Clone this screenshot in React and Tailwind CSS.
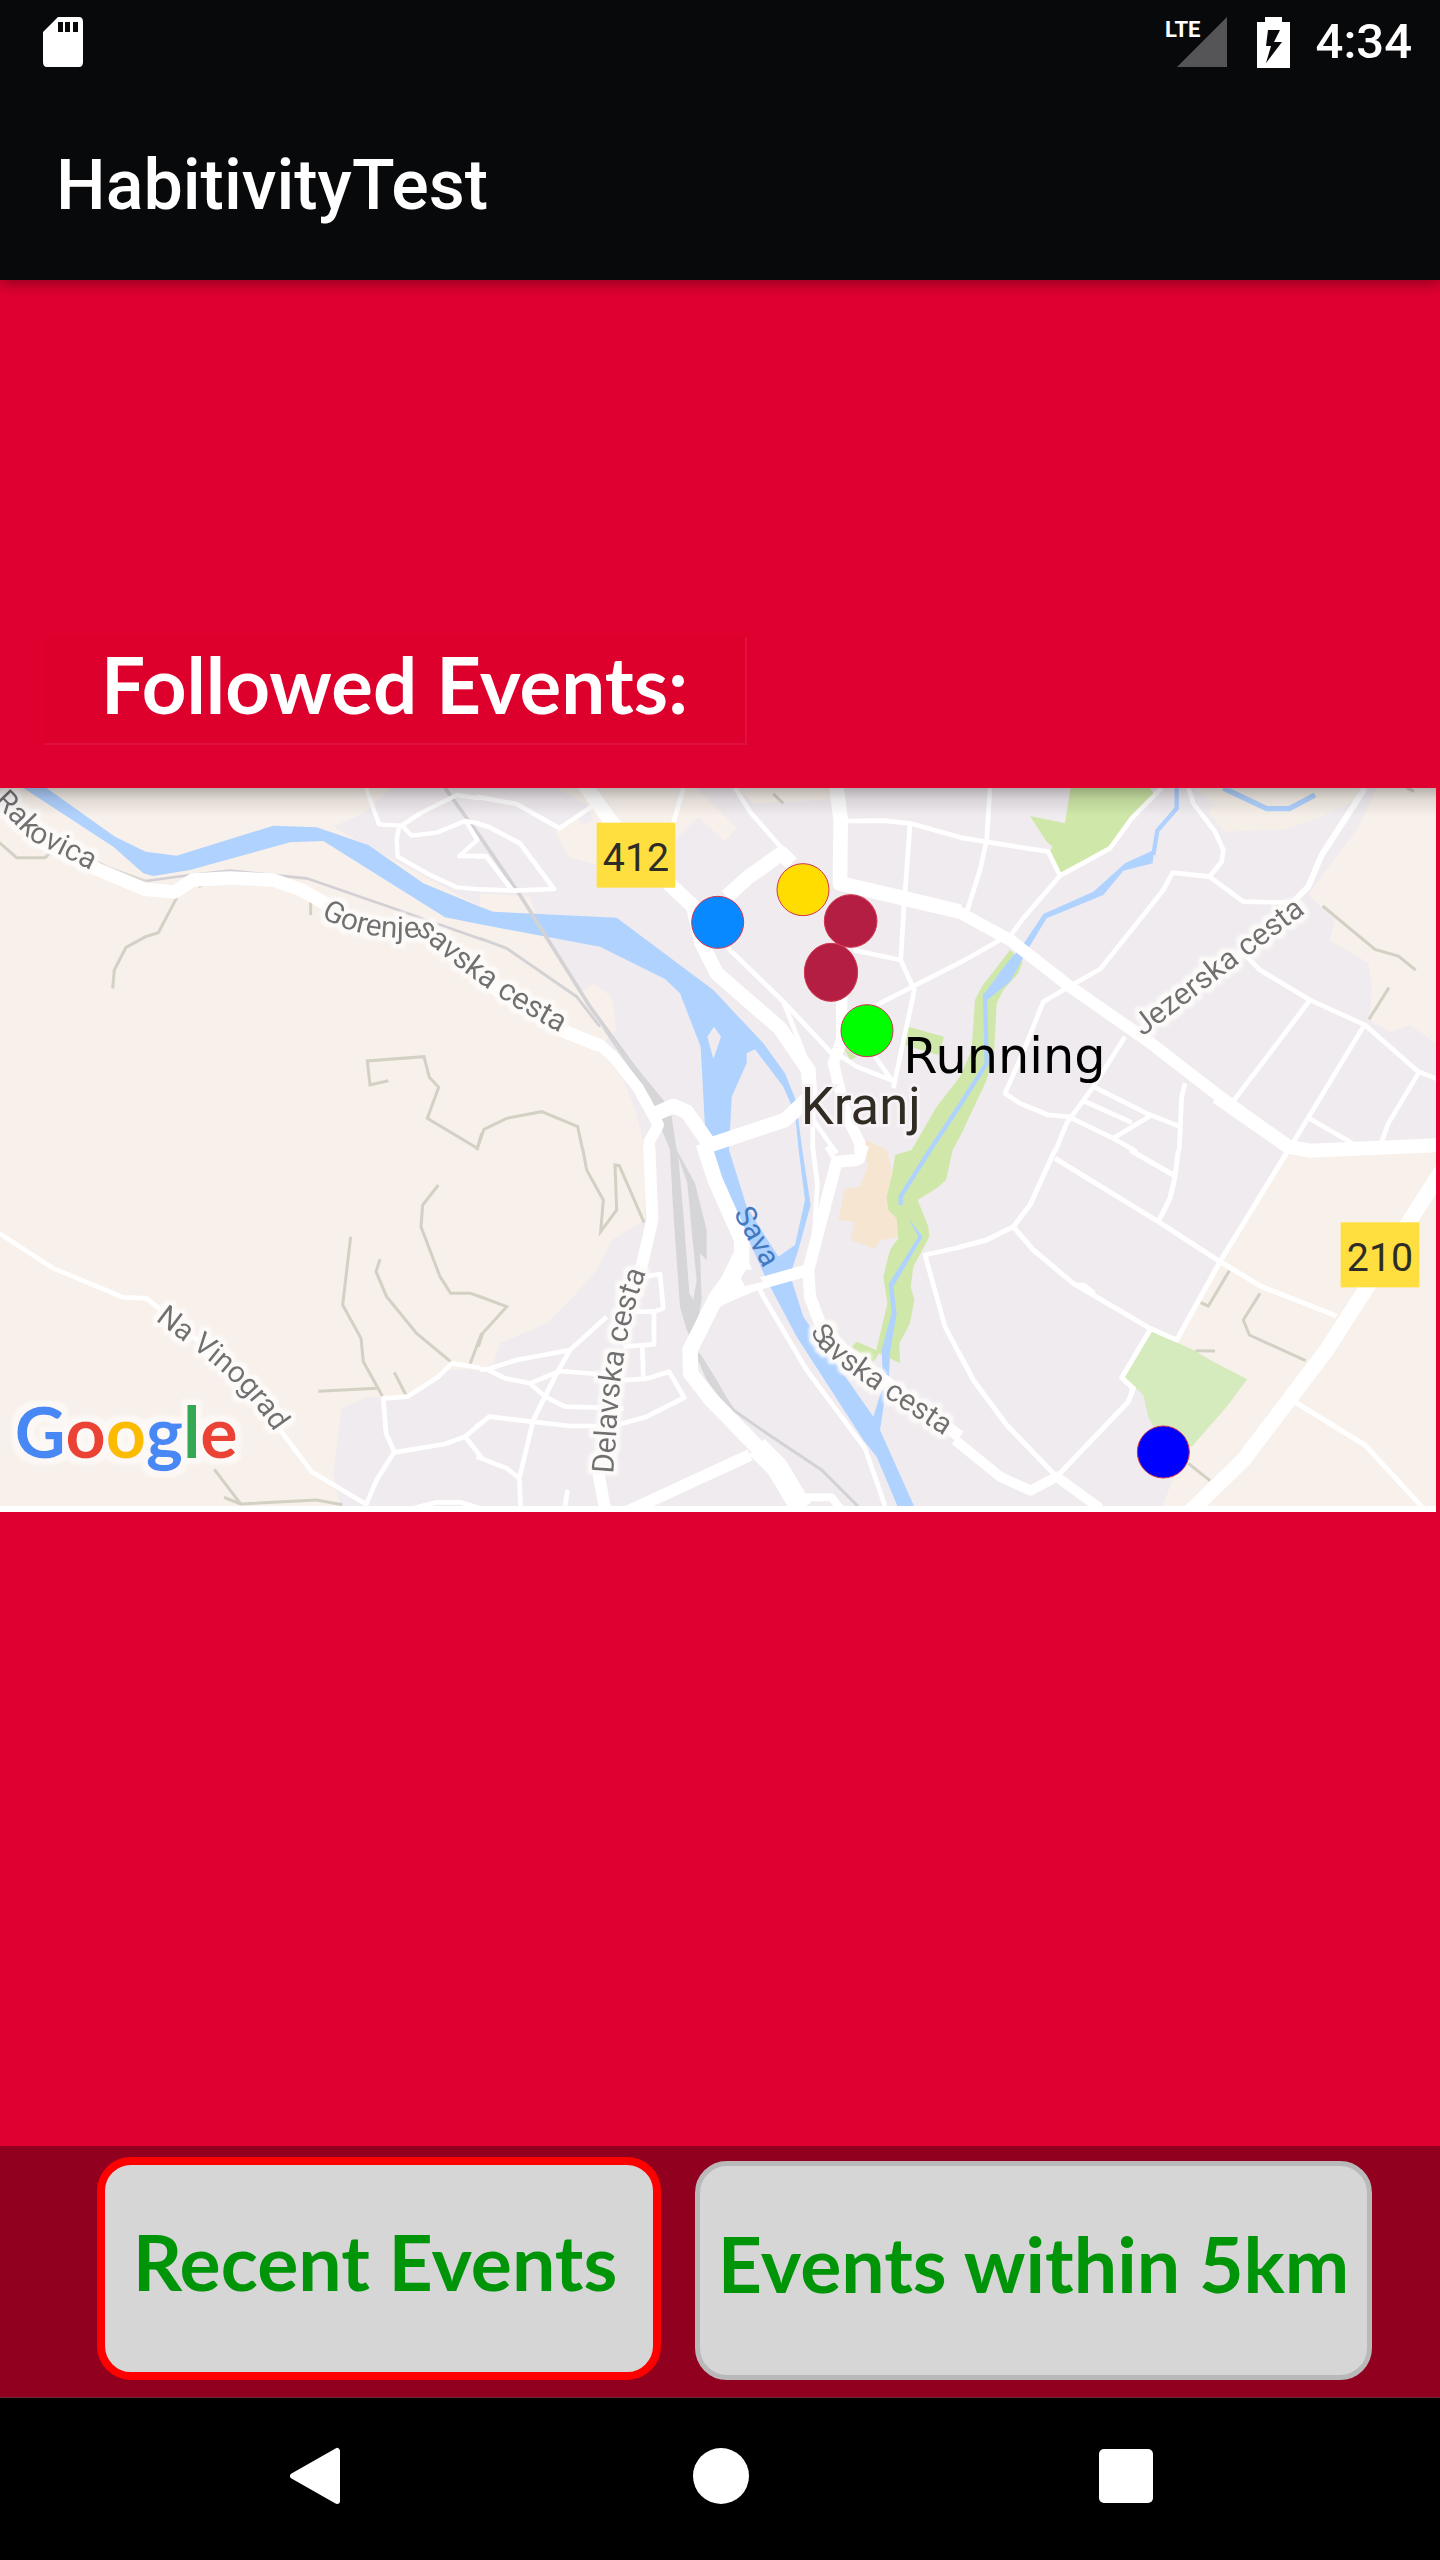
import React from "react";

const COL = 1440;
const ROW = 1110;

/* The map is drawn on a grid of 3 x 2 tiles; every path is local to its tile. */
function Tile({ c, r, children, ...rest }) {
  return (
    <g transform={`translate(${c * COL} ${r * ROW})`} {...rest}>
      {children}
    </g>
  );
}

const ROADS = [
  { c: 0, r: 0, w: 40, d: ["M-20 50 L120 185 L285 265 L435 328 L525 336 L578 300 L690 294 L820 300 L905 330 L1000 385 L1120 450 L1260 450 L1440 590 L1560 680 L1700 757 L1800 797"] },
  { c: 0, r: 0, w: 13, d: ["M1098 24 L1137 133 L1205 137 L1260 100 L1370 45 L1440 55", "M1205 135 L1235 167 L1310 158 L1395 123 L1440 130", "M1198 137 L1190 180 L1193 230 L1290 285 L1370 322 L1440 328", "M1398 125 L1432 180 L1378 228 L1455 228"] },
  { c: 1, r: 0, w: 44, d: ["M310 10 L390 120 L460 210 L640 380 L665 490 L710 580 L900 745 L985 870 L990 950 L915 1020 L690 1095 L620 995 L580 978 L530 1000", "M740 350 L800 295 L905 220 L935 250", "M1068 10 L1082 120 L1080 310 L1230 345 L1440 395"] },
  { c: 1, r: 0, w: 34, d: ["M355 790 L400 830 L475 925 L535 1035 L508 1085 L508 1120", "M1085 650 L1085 780 L1060 850 L1080 930 L1100 1010 L1140 1090 L1140 1120"] },
  { c: 1, r: 0, w: 14, d: ["M-10 50 L110 72 L238 145 L335 80", "M-10 130 L25 140 L120 190 L222 327 L100 332 L0 328", "M-10 230 L18 228 L100 335", "M610 24 L580 130", "M765 24 L810 95 L910 210", "M1090 123 L1210 122 L1290 130 L1445 173", "M1290 135 L1272 380 L1262 540 L1303 630 L1240 925", "M1120 510 L1262 540", "M1190 675 L1445 545", "M745 505 L910 665 L1060 825", "M910 665 L960 790 L1000 900 L998 1110", "M1070 820 L1130 860 L1245 905 M1185 830 L1235 900", "M1000 1020 L1070 1120"] },
  { c: 2, r: 0, w: 36, d: ["M-15 390 L150 480 L330 620 L560 780 L780 950 L980 1095"] },
  { c: 2, r: 0, w: 42, d: ["M770 950 L985 1100 L1050 1112 L1440 1095"] },
  { c: 2, r: 0, w: 14, d: ["M90 24 L80 180 L60 270 L22 390", "M0 173 L265 215 L300 287 L450 205 L515 115 L605 24", "M300 287 L190 415 L145 475", "M120 480 L0 548", "M685 24 L700 70 L765 155 L790 210 L785 245 L748 290 L638 278 L610 330 L420 568 L330 618 L250 665 L190 815 L135 940 L180 970 L265 1005 L325 1010 L460 1075 L530 1115", "M748 290 L850 365 L1000 368", "M860 530 L900 570 L1050 660 L1215 735 L1375 875 L1440 900", "M1050 660 L815 970", "M1210 740 L995 1095", "M1375 880 L1285 1030 L1260 1100", "M1045 1013 L1195 1100", "M495 770 L400 920 L320 1030 L285 1115", "M400 920 L560 1000 L660 1040", "M365 960 L515 1028", "M575 1005 L460 1075", "M675 910 L665 950 L658 1110"] },
  { c: 2, r: 0, w: 18, d: ["M1215 24 L1085 225 L1045 320 L1000 365"] },
  { c: 0, r: 1, w: 14, d: ["M-5 248 L160 355 L370 442 L440 445 L520 510 L640 610 L840 840 L935 965 L1097 1062", "M1440 655 L1410 648 L1355 640 L1315 680 L1222 740 L1150 745 L1158 850 L1183 905 L1130 990 L1097 1067", "M1183 907 L1335 882 L1395 860 L1440 822", "M1395 860 L1450 930", "M1240 1075 L1310 1057 L1380 1057 L1440 1075"] },
  { c: 1, r: 1, w: 36, d: ["M508 -10 L517 210 L480 370", "M355 970 L375 1075", "M430 1090 L810 915", "M1130 30 L1070 35 L985 360 L790 415 L700 460", "M985 360 L990 440 L1020 520 L1090 600 L1440 860"] },
  { c: 1, r: 1, w: 46, d: ["M670 -20 L705 90 L785 270 L785 340 L710 440 L630 600 L632 670 L690 745 L830 890"] },
  { c: 1, r: 1, w: 66, d: ["M830 890 L890 950 L965 1075"] },
  { c: 1, r: 1, w: 24, d: ["M960 1042 L1055 1042 L1080 1075"] },
  { c: 1, r: 1, w: 34, d: ["M1120 32 L1138 28 L1150 -15"] },
  { c: 1, r: 1, w: 14, d: ["M1065 30 L1040 -10 M998 -10 L1012 100 L1000 300", "M800 340 L850 440 L980 660 L1155 895 L1215 1067", "M495 380 L540 372 L550 475 L522 485 L522 583 L430 590 M440 485 L522 485", "M380 500 L270 600 L230 670 L160 810 L118 985 L122 1070", "M0 658 L22 658 L110 630 L270 600", "M22 658 L75 685 L150 700 L195 740 L255 770 L430 775", "M150 700 L240 663 L350 672 M487 590 L490 685 M410 692 L500 686 L567 665 L613 743 L500 800 L400 828 L270 828 L28 800 L-10 830", "M-10 920 L80 955 L118 985", "M263 1020 L255 1067", "M1445 290 L1335 315 L1395 530 L1445 625"] },
  { c: 2, r: 1, w: 30, d: ["M-15 870 L120 980 L212 1022 L290 980 L420 1075"] },
  { c: 2, r: 1, w: 46, d: ["M1450 55 L1100 600 L850 930 L690 1085"] },
  { c: 2, r: 1, w: 15, d: ["M285 0 L210 165 L160 230 L80 270 L-5 292", "M285 25 L595 215 L780 335 L905 410 L1130 498", "M160 230 L220 300 L340 400 L570 535 L650 570 L780 335 L985 0", "M510 0 L640 75 M655 0 L645 80 L630 145 L595 215", "M570 540 L485 683 L520 715 L505 755 L290 980 L140 825 L40 690 L-5 605", "M995 750 L1215 885 L1390 1075"] },
];

const TRAILS = [
  { c: 0, r: 0, d: ["M-5 185 L50 233 L135 233 L150 218", "M532 350 L475 458 L437 470 L378 502 L343 570 L338 625", "M1165 902 L1110 915 L1102 843 L1272 830 L1288 892 L1316 922 L1282 1015 L1432 1105 L1445 1060", "M932 360 L932 405 M595 320 L612 313"] },
  { c: 1, r: 0, d: ["M-10 1110 L12 1048 L80 1015 L185 995 L293 1040 L308 1110", "M880 42 L910 70"] },
  { c: 2, r: 0, d: ["M1088 378 L1245 508 L1315 528 L1367 570", "M1287 623 L1227 718", "M1340 24 L1362 34"] },
  { c: 0, r: 1, d: ["M1052 260 L1028 465 L1083 565 L1090 635 L1147 738", "M1140 328 L1128 365 L1160 440 L1250 550 L1352 635", "M1315 105 L1268 165 L1263 230 L1320 380 L1352 430 L1412 430 L1440 440", "M955 724 L1130 715 M1183 667 L1218 735", "M1445 550 L1410 642", "M643 958 L722 1062 L950 1050 L1027 1064 M722 1062 L672 1042"] },
  { c: 1, r: 1, d: ["M308 -5 L320 60 L370 150 L362 245 L410 180 L405 45 L418 47 L492 217", "M-5 438 L80 470 L8 550 L-5 590"] },
  { c: 2, r: 1, d: ["M808 362 L745 468 L722 458", "M900 430 L850 510 L868 555 L1037 632", "M707 602 L765 603", "M685 940 L750 992"] },
];

const LABELS = [
  { id: "rakovica", text: "Rakovica", size: 90, d: "M-20 66 L90 180 L300 285" },
  { id: "gorenje", text: "Gorenje", size: 90, d: "M962 410 Q1090 488 1280 470" },
  { id: "savska-w", text: "savska cesta", size: 92, d: "M1244 454 C1350 545 1480 660 1760 800" },
  { id: "jezerska", text: "Jezerska cesta", size: 92, d: "M3428 770 L3930 388" },
  { id: "vinograd", text: "Na Vinograd", size: 90, d: "M465 1620 C600 1725 720 1790 845 1990" },
  { id: "delavska", text: "Delavska cesta", size: 92, d: "M1840 2082 C1856 1900 1850 1700 1945 1460" },
  { id: "sava", text: "Sava", size: 88, d: "M2200 1300 L2315 1510", water: true },
  { id: "savska-e1", text: "S", size: 84, d: "M2430 1655 L2480 1730" },
  { id: "savska-e2", text: "avska cesta", size: 90, d: "M2448 1690 C2530 1780 2660 1850 2880 2000" },
];

const PINS = [
  { name: "Yellow event", x: 2409, y: 329, rx: 78, ry: 78, fill: "#ffdd00" },
  { name: "Blue event", x: 2153, y: 427, rx: 78, ry: 78, fill: "#0889ff" },
  { name: "Crimson event north", x: 2552, y: 423, rx: 79, ry: 79, fill: "#b51e43" },
  { name: "Crimson event south", x: 2493, y: 577, rx: 80, ry: 87, fill: "#b51e43" },
  { name: "Running event", x: 2601, y: 752, rx: 78, ry: 78, fill: "#00ff00" },
  { name: "Navy event", x: 3490, y: 2016, rx: 78, ry: 78, fill: "#0000ff" },
];

function Badge({ x, y, children }) {
  return (
    <g>
      <rect x={x} y={y} width="236" height="195" fill="#ffde3f" />
      <text x={x + 118} y={y + 146} fontSize="118" textAnchor="middle" fill="#2e2c27">
        {children}
      </text>
    </g>
  );
}

function Halo({ id, radius, color }) {
  return (
    <filter id={id} x="-5%" y="-20%" width="110%" height="140%">
      <feMorphology in="SourceAlpha" operator="dilate" radius={radius} result="grown" />
      <feGaussianBlur in="grown" stdDeviation="4" result="soft" />
      <feFlood floodColor={color} />
      <feComposite in2="soft" operator="in" result="halo" />
      <feMerge>
        <feMergeNode in="halo" />
        <feMergeNode in="SourceGraphic" />
      </feMerge>
    </filter>
  );
}

function StreetName({ label, fill }) {
  return (
    <text fontSize={label.size} fill={fill}>
      <textPath href={`#${label.id}`}>{label.text}</textPath>
    </text>
  );
}

function EventMap() {
  return (
    <svg viewBox="0 24 4308 2172" className="block w-full font-[Roboto,sans-serif]" role="img" aria-label="Map of Kranj with followed events">
      <defs>
        <linearGradient id="map-shade" x1="0" y1="0" x2="0" y2="1">
          <stop offset="0" stopColor="#000" stopOpacity="0.27" />
          <stop offset="0.4" stopColor="#000" stopOpacity="0.1" />
          <stop offset="1" stopColor="#000" stopOpacity="0" />
        </linearGradient>
        <Halo id="street-halo" radius="11" color="#fdfbfa" />
        <Halo id="logo-halo" radius="18" color="#fcf8f5" />
        {LABELS.map((l) => (
          <path key={l.id} id={l.id} d={l.d} />
        ))}
      </defs>

      <rect x="0" y="24" width="4308" height="2172" fill="#f8f0ea" />
      <path
        fill="#f0ebef"
        d="M1175 24 L1090 100 L1000 140 L1100 195 L1440 380 L1440 340 L1590 350 L1630 470 L1690 560 L1740 640 L1780 610 L1835 650 L1850 750 L1800 800 L1870 900 L1910 1000 L1935 1110 L1935 1320 L1835 1380 L1790 1470 L1720 1550 L1640 1630 L1500 1690 L1480 1750 L1440 1768 L1350 1770 L1220 1855 L1100 1852 L1025 1885 L1000 2080 L1025 2196 L3480 2196 L3530 2070 L3530 1680 L3860 1110 L4308 1100 L4308 790 L4230 735 L4170 757 L4110 720 L4115 620 L4105 550 L3990 480 L4005 420 L3925 345 L3970 280 L4070 150 L4130 24 Z"
      />
      <Tile c={1} r={0} fill="#f8f0ea">
        <path d="M230 24 L320 75 L340 120 L310 135 L290 115 L225 155 L265 230 L350 255 L590 175 L655 110 L735 185 L770 145 L650 24 Z" />
        <path d="M770 24 L820 70 L1060 58 L1060 24 Z" />
      </Tile>
      <Tile c={2} r={0}>
        <path fill="#f6efe8" d="M700 24 L772 75 L745 95 L795 155 L980 147 L1070 115 L1190 60 L1215 24 Z" />
      </Tile>

      {/* Parks and the hospital grounds */}
      <path fill="#f6e5d1" d="M2600 1080 L2590 1120 L2605 1155 L2580 1220 L2535 1225 L2515 1320 L2565 1325 L2552 1380 L2625 1407 L2640 1380 L2700 1370 L2690 1315 L2665 1290 L2675 1170 L2660 1110 Z" />
      <g fill="#cfe8a9">
        <path d="M3030 510 L2945 620 L2925 660 L2915 810 L2880 890 L2810 980 L2735 1110 L2685 1125 L2675 1190 L2660 1250 L2665 1290 L2690 1315 L2695 1375 L2670 1410 L2650 1490 L2662 1570 L2628 1715 L2700 1750 L2698 1690 L2730 1630 L2743 1560 L2732 1520 L2740 1460 L2788 1370 L2785 1340 L2753 1260 L2810 1225 L2838 1200 L2858 1110 L2885 1060 L2960 900 L2982 820 L2990 670 L3010 630 L3055 580 L3068 545 Z" />
        <path d="M3212 24 L3195 130 L3090 108 L3140 185 L3158 200 L3148 215 L3180 283 L3330 205 L3395 115 L3463 45 L3450 24 Z" />
        <path d="M2725 740 L2832 770 L2815 825 L2715 795 Z M2530 800 L2570 830 L2550 840 Z M2570 1685 L2640 1715 L2620 1745 L2555 1700 Z" />
      </g>
      <path fill="#d5ebbd" d="M3453 1652 L3370 1790 L3430 1845 L3445 1910 L3480 1980 L3575 2000 L3680 1880 L3742 1798 L3640 1745 L3580 1710 Z" />

      {/* Water */}
      <path
        fill="#b0d2ff"
        d="M140 24 L345 170 L437 215 L530 227 L820 137 L950 142 L1105 195 L1270 310 L1440 380 L1480 395 L1850 413 L2140 630 L2290 790 L2355 880 L2387 960 L2407 1110 L2432 1275 L2395 1410 L2370 1485 L2410 1610 L2620 1910 L2645 1830 L2658 1830 L2640 1950 L2750 2196 L2700 2196 L2630 2030 L2590 1980 L2390 1670 L2300 1500 L2210 1300 L2155 1210 L2130 1125 L2115 1040 L2102 800 L2040 640 L1995 597 L1800 500 L1440 433 L1335 412 L970 183 L870 187 L570 270 L460 288 L430 280 L340 200 L70 24 Z"
      />
      <path fill="#f0ebef" d="M2265 808 L2240 820 L2240 850 L2195 950 L2187 1110 L2240 1280 L2335 1430 L2385 1395 L2415 1260 L2396 1110 L2385 1000 L2350 920 Z M2142 740 L2163 770 L2140 837 L2122 770 Z" />
      <g fill="none" stroke="#b0d2ff" strokeWidth="13">
        <path d="M3530 24 L3530 85 L3472 152 L3460 225" />
        <path d="M2955 640 L2960 850 L2880 975 L2790 1110 L2702 1250 L2702 1275" />
        <path d="M3670 24 L3800 86 L3868 86 L3945 45" strokeWidth="16" />
      </g>
      <path fill="#b0d2ff" d="M3462 210 L3375 250 L3280 335 L3130 402 L3065 500 L3020 550 L2950 645 L2962 660 L3030 605 L3088 500 L3140 415 L3310 345 L3370 272 L3458 250 Z M2725 1315 L2755 1370 L2666 1512 L2675 1600 L2645 1710 L2650 1830 L2665 1830 L2670 1720 L2690 1600 L2680 1520 L2768 1370 Z" />

      {/* Railways */}
      <g fill="none" stroke="#d3d2d4" strokeWidth="11">
        <path d="M1335 24 L1440 170 L1560 345 L1770 680 L1850 790 L1980 970" />
        <path d="M1440 475 L1520 505 L1730 650 L1800 740" strokeWidth="9" />
        <path d="M437 303 L570 285 L690 272 L920 295 L1180 385 L1450 480" stroke="#d2cfd5" strokeWidth="8" />
        <path d="M290 245 L330 265 L437 303" stroke="#dcd6d0" strokeWidth="8" />
        <path d="M2095 1730 L2130 1795 L2200 1890 L2300 1960 L2465 2070 L2575 2180" strokeWidth="9" />
      </g>
      <path fill="#d6d5d7" d="M1800 735 L1850 790 L1990 960 L2015 1010 L2030 1110 L2085 1210 L2120 1350 L2120 1440 L2100 1420 L2105 1560 L2090 1640 L2080 1690 L2060 1650 L2040 1580 L2020 1300 L2010 1110 L1970 1010 L1955 960 Z" />
      <path fill="#f0ebef" d="M2035 1130 L2062 1210 L2075 1350 L2090 1500 L2080 1560 L2068 1540 L2050 1300 Z" />
      <path fill="#d6d5d7" d="M2085 1720 L2100 1720 L2150 1800 L2190 1870 L2180 1880 L2120 1800 Z" />

      <g fill="none" stroke="#d2d1c4" strokeWidth="9">
        {TRAILS.map((t, i) => (
          <Tile key={i} c={t.c} r={t.r}>
            {t.d.map((d) => (
              <path key={d} d={d} />
            ))}
          </Tile>
        ))}
      </g>

      <g fill="none" stroke="#fff" strokeLinejoin="round">
        {ROADS.map((t, i) => (
          <Tile key={i} c={t.c} r={t.r} strokeWidth={t.w}>
            {t.d.map((d) => (
              <path key={d} d={d} />
            ))}
          </Tile>
        ))}
      </g>
      <path fill="#fff" d="M2205 1410 L2240 1450 L2300 1520 L2150 1580 L2140 1540 Z" />
      <path fill="#f0ebef" d="M2238 1470 L2222 1495 L2235 1518 L2290 1505 L2262 1468 Z" />
      <path fill="#fff" d="M3230 1508 L3255 1508 L3285 1532 L3288 1550 Z" />

      {/* Street names */}
      <g filter="url(#street-halo)">
        {LABELS.filter((l) => !l.water).map((l) => (
          <StreetName key={l.id} label={l} fill="#6f6f6f" />
        ))}
      </g>
      {LABELS.filter((l) => l.water).map((l) => (
        <StreetName key={l.id} label={l} fill="#4279c0" />
      ))}

      <Badge x={1790} y={128}>412</Badge>
      <Badge x={4022} y={1327}>210</Badge>
      <text x="2402" y="1032" fontSize="158" fill="#302c24" stroke="#f6f2f5" strokeWidth="18" paintOrder="stroke">
        Kranj
      </text>
      <text x="44" y="2034" fontSize="210" className="font-[Lato,sans-serif] font-bold" filter="url(#logo-halo)">
        <tspan fill="#4688f4">G</tspan>
        <tspan fill="#ea4335">o</tspan>
        <tspan fill="#fbbc05">o</tspan>
        <tspan fill="#4688f4">g</tspan>
        <tspan fill="#34a853">l</tspan>
        <tspan fill="#ea4335">e</tspan>
      </text>

      <rect x="0" y="2178" width="4308" height="18" fill="#fff" />
      <rect x="0" y="24" width="4308" height="84" fill="url(#map-shade)" />

      {PINS.map((p) => (
        <ellipse key={p.name} cx={p.x} cy={p.y} rx={p.rx} ry={p.ry} fill={p.fill} stroke="#d0354f" strokeWidth="3">
          <title>{p.name}</title>
        </ellipse>
      ))}
      <text x="2710" y="879" fontSize="148" fill="#000" className="font-['DejaVu_Sans',sans-serif]">
        Running
      </text>
    </svg>
  );
}

export default function App() {
  return (
    <div className="flex min-h-screen flex-col bg-[#e00030] font-[Roboto,sans-serif]">
      <header className="relative z-10 bg-[#08090b] text-white shadow-[0_4px_14px_rgba(0,0,0,0.35)]">
        <div className="flex h-[84px] items-center justify-between pr-[28px] pl-[43px]">
          <svg viewBox="0 0 40 50" className="h-[50px] w-[40px]" aria-label="SD card">
            <path fill="#fff" fillRule="evenodd" d="M15 0 H36 Q40 0 40 5 V45 Q40 50 36 50 H4 Q0 50 0 45 V15 Z M15 5 V15 H20 V5 Z M22 5 V15 H27 V5 Z M30 5 V15 H35 V5 Z" />
          </svg>
          <div className="flex items-center">
            <svg viewBox="0 0 62 50" className="h-[50px] w-[62px] overflow-visible" aria-label="LTE signal">
              <path fill="#555557" d="M62 0 V50 H12 Z" />
              <text x="0" y="20" fontSize="22" fill="#fff" className="font-bold">
                LTE
              </text>
            </svg>
            <svg viewBox="0 0 33 51" className="ml-[30px] h-[51px] w-[33px]" aria-label="Battery charging">
              <path fill="#fff" fillRule="evenodd" d="M8 0 H25 V5 H33 V51 H0 V5 H8 Z M11 13 L9 29 H14 L9 46 L25 25 H17 L23 13 Z" />
            </svg>
            <span className="ml-[26px] text-[49px] leading-[88px] font-medium">4:34</span>
          </div>
        </div>
        <h1 className="h-[196px] pl-[56px] text-[70px] leading-[202px] font-medium">HabitivityTest</h1>
      </header>

      <main className="flex flex-1 flex-col">
        <h2 className="mt-[357px] mb-[43px] ml-[45px] w-[702px] border-r-2 border-b-2 border-[#e01040] bg-[#dd002d] pb-[12px] pl-[56px] font-[Lato,sans-serif] text-[78px] leading-[94px] font-bold text-white">
          Followed Events:
        </h2>
        <div className="mr-1">
          <EventMap />
        </div>
      </main>

      <div className="flex items-end gap-[34px] border-b border-[#6b2a3a] bg-[#91001e] pt-[11px] pr-[68px] pb-[17px] pl-[97px] font-[Lato,sans-serif] text-[77px] font-bold text-[#009409]">
        <button type="button" className="h-[223px] flex-[540] rounded-[34px] border-8 border-[#ff0000] bg-[#d6d6d6] pr-[8px] pb-[14px] whitespace-nowrap">
          Recent Events
        </button>
        <button type="button" className="h-[219px] flex-[667] rounded-[32px] border-[5px] border-[#b9b9b9] bg-[#d6d6d6] pb-[14px] whitespace-nowrap">
          Events within 5km
        </button>
      </div>

      <nav className="flex h-[162px] items-center justify-center gap-[350px] bg-black pb-[6px]">
        <button type="button" aria-label="Back">
          <svg viewBox="0 0 56 58" className="h-[58px] w-[56px]">
            <path fill="#fff" stroke="#fff" strokeWidth="6" strokeLinejoin="round" d="M50 4 V54 L6 29 Z" />
          </svg>
        </button>
        <button type="button" aria-label="Home" className="h-[56px] w-[56px] rounded-full bg-white" />
        <button type="button" aria-label="Recent apps" className="h-[54px] w-[54px] rounded-[5px] bg-white" />
      </nav>
    </div>
  );
}
